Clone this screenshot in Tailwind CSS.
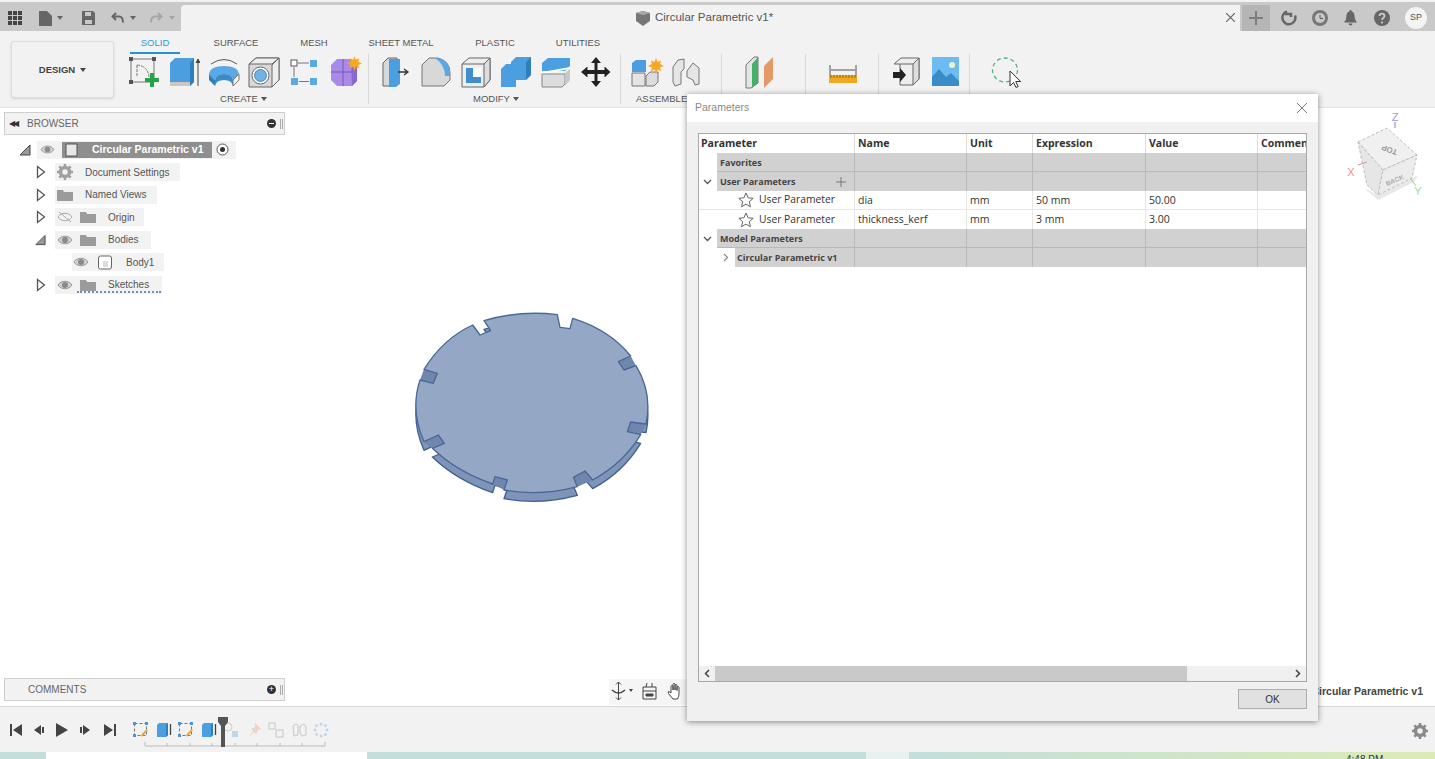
<!DOCTYPE html>
<html lang="en">
<head>
    <meta charset="UTF-8">
    <title>Circular Parametric v1 - Parameters</title>
    <script src="https://cdn.jsdelivr.net/npm/@tailwindcss/browser@4"></script>
</head>
<body class="bg-white font-['Liberation_Sans',sans-serif] text-[#555] overflow-hidden">
    <!-- shared icons -->
    <svg class="absolute w-0 h-0">
        <defs>
            <symbol id="eye" viewBox="0 0 16 12"><path d="M1 6c3-5 11-5 14 0c-3 5-11 5-14 0z" fill="#d0d0d0" stroke="#999"/><circle cx="8" cy="6" r="3" fill="#8a8a8a"/></symbol>
            <symbol id="folder" viewBox="0 0 16 12"><path d="M0 1h6l1 2h9v9H0z" fill="#9b9b9b"/></symbol>
            <symbol id="closed" viewBox="0 0 10 14"><path d="M1.500 1.500L8.500 7L1.500 12.500z" fill="#fff" stroke="#555" stroke-width="1.300"/></symbol>
            <symbol id="open" viewBox="0 0 12 12"><path d="M1 11L11 1V11z" fill="#999" stroke="#444"/></symbol>
            <symbol id="star" viewBox="0 0 16 16"><path d="M8 1l2.100 4.800 5.100.5-3.900 3.400 1.200 5.100L8 12.100l-4.500 2.700 1.200-5.100L.8 6.300l5.100-.5z" fill="#fff" stroke="#666"/></symbol>
            <symbol id="sun" viewBox="0 0 14 14"><path d="M7 0l1.300 3.500L11.500 2 10.500 5.300 14 7l-3.500 1.300 1 3.300-3.200-1.500L7 14l-1.300-3.900-3.200 1.500 1-3.300L0 7l3.500-1.700-1-3.300 3.200 1.500z" fill="#f7a823"/></symbol>
            <symbol id="sketch-step" viewBox="0 0 16 16"><rect x="1.500" y="1.500" width="12" height="12" fill="none" stroke="#777" stroke-dasharray="3 2"/><path d="M0 0h3v3H0zM12 0h3v3h-3zM0 12h3v3H0z" fill="#4f94c9"/><path d="M9 15l6-7-1.500-1L8 13z" fill="#e8a43a"/></symbol>
            <symbol id="extrude-step" viewBox="0 0 16 16"><path d="M1 3l2-2h9v12l-2 2H1z" fill="#4b9fe0"/><path d="M10 3l2-2v12l-2 2z" fill="#2f7fbd"/><path d="M14.500 2v11" stroke="#444" stroke-width="1.300"/></symbol>
        </defs>
    </svg>

    <div class="flex flex-col h-[759px]">
        <!-- top strip and tabs -->
        <div class="h-[5px] border-t-[2px] border-t-[#f2f2f2] bg-[#c9c9c9] shrink-0"></div>
        <div class="flex h-[26px] shrink-0 bg-[#c9c9c9]">
            <div class="w-[181px] flex items-center pl-[8px]">
                <svg width="14" height="14" viewBox="0 0 14 14" fill="#444"><path d="M0 0h4v4H0zM5 0h4v4H5zM10 0h4v4h-4zM0 5h4v4H0zM5 5h4v4H5zM10 5h4v4h-4zM0 10h4v4H0zM5 10h4v4H5zM10 10h4v4h-4z"/></svg>
                <svg class="ml-[17px]" width="13" height="15" viewBox="0 0 13 15" fill="#666"><path d="M0 0h8l5 5v10H0z"/></svg>
                <span class="ml-[5px] border-x-[3px] border-x-transparent border-t-[4px] border-t-[#666]"></span>
                <svg class="ml-[19px]" width="13" height="14" viewBox="0 0 13 14"><path d="M0 0h11l2 2v12H0z" fill="#666"/><path d="M3 1h6v4H3zM3 9h7v4H3z" fill="#c9c9c9"/></svg>
                <svg class="ml-[16px]" width="13" height="12" viewBox="0 0 13 12" fill="none" stroke="#666" stroke-width="2"><path d="M5 1L1.500 4.500L5 8M2 4.500h6c3 0 4 2 4 6"/></svg>
                <span class="ml-[6px] border-x-[3px] border-x-transparent border-t-[4px] border-t-[#666]"></span>
                <svg class="ml-[14px]" width="13" height="12" viewBox="0 0 13 12" fill="none" stroke="#a5a5a5" stroke-width="2"><path d="M8 1l3.500 3.500L8 8M11 4.500H5c-3 0-4 2-4 6"/></svg>
                <span class="ml-[6px] border-x-[3px] border-x-transparent border-t-[4px] border-t-[#a5a5a5]"></span>
            </div>
            <div class="w-[1059px] bg-[#f2f2f2] rounded-tl-[4px] flex items-center relative">
                <div class="flex items-center gap-[4px] ml-[454px] text-[11.500px] text-[#555]">
                    <svg width="16" height="15" viewBox="0 0 16 15"><path d="M1 2l7-2 7 2v8l-7 5-7-5z" fill="#777"/><path d="M1 2l7 2 7-2-7-2z" fill="#aaa"/></svg>
                    <span>Circular Parametric v1*</span>
                </div>
                <svg class="absolute right-[5px] top-[8px]" width="9" height="9" viewBox="0 0 9 9" stroke="#666" stroke-width="1.200"><path d="M0 0l9 9M9 0L0 9"/></svg>
            </div>
            <div class="flex-1 flex items-center">
                <div class="w-[28px] ml-[2px] h-full bg-[#b5b5b5] flex items-center justify-center">
                    <svg width="14" height="14" viewBox="0 0 14 14" stroke="#7d7d7d" stroke-width="2"><path d="M7 0v14M0 7h14"/></svg>
                </div>
                <svg class="ml-[11px]" width="16" height="16" viewBox="0 0 16 16" fill="none" stroke="#666" stroke-width="2.500"><path d="M6 1.500a6.500 6.500 0 1 0 8 4M4 4h6v3"/></svg>
                <svg class="ml-[15px]" width="16" height="16" viewBox="0 0 16 16"><circle cx="8" cy="8" r="8" fill="#777"/><circle cx="8" cy="8" r="5" fill="#c9c9c9"/><path d="M8 5v3.500h3" stroke="#555" fill="none"/></svg>
                <svg class="ml-[15px]" width="15" height="16" viewBox="0 0 15 16" fill="#666"><path d="M7.500 0c-1 0-1.300 1-1.300 1.500C3 2.500 3.500 7 3 9c-.3 1.200-1.500 2.500-2 3.500h13c-.5-1-1.700-2.300-2-3.500-.5-2 0-6.500-3.200-7.500C8.800 1 8.500 0 7.500 0zM5.500 13.500h4a2 2 0 0 1-4 0z"/></svg>
                <svg class="ml-[16px]" width="16" height="16" viewBox="0 0 16 16"><circle cx="8" cy="8" r="8" fill="#666"/><path d="M5.500 6c0-3.200 5-3.200 5 0c0 2-2.500 2-2.500 4" stroke="#c9c9c9" stroke-width="1.800" fill="none"/><circle cx="8" cy="12.500" r="1.100" fill="#c9c9c9"/></svg>
                <div class="ml-[15px] w-[22px] h-[22px] rounded-full bg-[#f4f4f4] text-[9px] text-[#555] flex items-center justify-center">SP</div>
            </div>
        </div>

        <!-- ribbon -->
        <div class="h-[77px] shrink-0 bg-[#f2f2f2] border-b border-b-[#e3e3e3] flex items-start">
            <div class="ml-[11px] mt-[10px] w-[103px] h-[57px] pt-[1px] bg-[#f2f2f2] border border-[#dcdcdc] rounded-[3px] shadow-sm flex items-center justify-center gap-[5px] text-[9.500px] font-semibold text-[#444]">
                DESIGN <span class="border-x-[3px] border-x-transparent border-t-[4px] border-t-[#444]"></span>
            </div>
            <div class="ml-[10px] flex flex-col">
                <div class="flex h-[23px] text-[9.500px] leading-[23px] text-[#555] text-center">
                    <div class="ml-[6px] w-[50px] text-[#2d9cdb] border-b-[2px] border-b-[#1f93d3]">SOLID</div>
                    <div class="ml-[16px] w-[80px]">SURFACE</div>
                    <div class="w-[76px]">MESH</div>
                    <div class="w-[98px]">SHEET METAL</div>
                    <div class="w-[90px]">PLASTIC</div>
                    <div class="w-[76px]">UTILITIES</div>
                </div>
                <div class="flex h-[52px] items-start">
                    <!-- create -->
                    <div class="w-[245px] h-[50px] border-r border-r-[#d8d8d8] flex flex-col">
                        <div class="flex h-[36px] shrink-0 items-center">
                            <div class="w-[40px] flex justify-center"><svg width="32" height="32" viewBox="0 0 32 32"><rect x="3" y="3" width="23" height="23" fill="none" stroke="#777"/><path d="M1 1h4v4H1zM24 1h4v4h-4zM1 24h4v4H1z" fill="#555"/><path d="M9 9v12M9 9q11 1 12 12" fill="none" stroke="#777" stroke-dasharray="3 1"/><path d="M22 17h4v5h5v4h-5v5h-4v-5h-5v-4h5z" fill="#1fa64a"/></svg></div>
                            <div class="w-[40px] flex justify-center"><svg width="32" height="32" viewBox="0 0 32 32"><path d="M2 7l5-5h19v24l-4 4H2z" fill="#4b9fe0"/><path d="M22 7l4-5v24l-4 4z" fill="#2f7fbd"/><path d="M2 26h20v4H2z" fill="#cfc7bd"/><path d="M30 30V4M28 7l2-4 2 4" stroke="#444" fill="#444"/></svg></div>
                            <div class="w-[40px] flex justify-center"><svg width="32" height="32" viewBox="0 0 32 32"><path d="M3 8q13-9 26 0" fill="none" stroke="#555"/><path d="M1 18q1-8 15-8t15 8l-6 6q-1-6-9-6t-9 6z" fill="#5aa9e6"/><path d="M1 18l6 6v6l-6-6z" fill="#2f7fbd"/><path d="M7 24q1-6 9-6t9 6v6q-1-6-9-6t-9 6z" fill="#3a8bca"/><path d="M25 24l6-6v6l-6 6z" fill="#f4f4f4" stroke="#777"/></svg></div>
                            <div class="w-[40px] flex justify-center"><svg width="32" height="32" viewBox="0 0 32 32"><path d="M1 8l7-6h23v22l-7 7H1z" fill="#d8d8d8" stroke="#666"/><path d="M24 9l7-7v22l-7 7zM1 8h23l7-6H8z" fill="#eee" stroke="#666"/><circle cx="12.500" cy="19.500" r="8.500" fill="#fff" stroke="#666"/><circle cx="12.500" cy="19.500" r="6" fill="#6eb2e6" stroke="#4688bd"/></svg></div>
                            <div class="w-[40px] flex justify-center"><svg width="30" height="30" viewBox="0 0 30 30"><rect x="2" y="3" width="6" height="6" fill="#fff" stroke="#555"/><rect x="21" y="3" width="7" height="7" fill="#5aa9e0"/><rect x="2" y="21" width="7" height="7" fill="#5aa9e0"/><rect x="21" y="21" width="7" height="7" fill="#5aa9e0"/><path d="M9 6h11M5 10v10M10 24.500h10" stroke="#777"/></svg></div>
                            <div class="w-[40px] flex justify-center relative"><svg width="32" height="32" viewBox="0 0 32 32"><path d="M3 9l6-6h14l6 7v15l-5 5H9l-6-6z" fill="#a98ae6"/><path d="M3 16h26M15 3v27" stroke="#7559bd"/><path d="M23 3l6 7v15l-5 5z" fill="#8768d0"/></svg><svg class="absolute right-[2px] top-0" width="15" height="15"><use href="#sun"/></svg></div>
                        </div>
                        <div class="flex justify-center items-center gap-[3px] text-[9.500px] leading-[11px] mt-[3px] mr-[5px]">CREATE <span class="border-x-[3px] border-x-transparent border-t-[4px] border-t-[#555]"></span></div>
                    </div>
                    <!-- modify -->
                    <div class="w-[252px] pl-[7px] h-[50px] border-r border-r-[#d8d8d8] flex flex-col">
                        <div class="flex h-[36px] shrink-0 items-center">
                            <div class="w-[40px] flex justify-center"><svg width="30" height="32" viewBox="0 0 30 32"><path d="M2 7l5-5h9v28H2z" fill="#d8d8d8" stroke="#666"/><path d="M8 3h11v25l-5 3H8z" fill="#4b9fe0"/><path d="M17 16h9M23 13l4 3-4 3" stroke="#333" fill="none" stroke-width="1.300"/></svg></div>
                            <div class="w-[40px] flex justify-center"><svg width="30" height="32" viewBox="0 0 30 32"><path d="M1 9l7-7h9q12 3 12 15v7l-6 6H1z" fill="#d8d8d8" stroke="#777"/><path d="M14 2h3q12 3 12 15v3h-5q0-11-10-18z" fill="#5aa9e6"/></svg></div>
                            <div class="w-[40px] flex justify-center"><svg width="30" height="32" viewBox="0 0 30 32"><path d="M1 8l7-6h21v22l-6 7H1z" fill="#eee" stroke="#666"/><path d="M23 8l6-6v22l-6 7zM1 8h22" fill="#ddd" stroke="#666"/><path d="M5 12h7v9h8v6H5z" fill="#3f8fd0"/><path d="M12 12h8v9h-8z" fill="#fff"/></svg></div>
                            <div class="w-[40px] flex justify-center"><svg width="32" height="32" viewBox="0 0 32 32"><path d="M11 6l5-5h15v18l-5 5H16v7H1V13l5-5h5z" fill="#4b9fe0"/><path d="M26 6l5-5v18l-5 5z" fill="#2f7fbd"/></svg></div>
                            <div class="w-[40px] flex justify-center"><svg width="30" height="32" viewBox="0 0 30 32"><path d="M1 7l6-5h22v8l-5 5H1z" fill="#4b9fe0"/><path d="M1 16l28-5v2L1 18z" fill="#fff"/><path d="M1 18h23v10l-3 3H1z" fill="#dcdcdc" stroke="#888"/><path d="M24 17l5-4v11l-5 6z" fill="#c8c8c8"/></svg></div>
                            <div class="w-[40px] flex justify-center"><svg width="30" height="30" viewBox="0 0 30 30" fill="#222"><path d="M15 0l5 6h-3.500v7h7v-3.500l6 5.500-6 5.500v-3.500h-7v7h3.500l-5 6-5-6h3.500v-7h-7v3.500L0 15l6.500-5.500V13h7V6H10z"/></svg></div>
                        </div>
                        <div class="flex justify-center items-center gap-[3px] text-[9.500px] leading-[11px] mt-[3px] mr-[4px]">MODIFY <span class="border-x-[3px] border-x-transparent border-t-[4px] border-t-[#555]"></span></div>
                    </div>
                    <!-- assemble -->
                    <div class="w-[101px] pl-[5px] h-[50px] border-r border-r-[#d8d8d8] flex flex-col">
                        <div class="flex h-[36px] shrink-0 items-center">
                            <div class="w-[40px] flex justify-center relative"><svg width="30" height="30" viewBox="0 0 30 30"><path d="M1 6l4-3h10v12H1z" fill="#4b9fe0"/><path d="M1 16h13v13H1z" fill="#e4e4e4" stroke="#777"/><path d="M15 19l4-4h8v10l-4 4h-8z" fill="#dcdcdc" stroke="#777"/></svg><svg class="absolute right-[2px] top-[1px]" width="16" height="16"><use href="#sun"/></svg></div>
                            <div class="w-[40px] flex justify-center"><svg width="30" height="30" viewBox="0 0 30 30" fill="#e5e5e5" stroke="#777"><path d="M2 10l5-7 6-1v10l-3 3v12l-6 2-2-4z"/><path d="M16 14l6-8 6 5v16l-4 1-2-5-6-3z"/></svg></div>
                        </div>
                        <div class="text-[9.500px] leading-[11px] mt-[3px] pl-[10px]">ASSEMBLE</div>
                    </div>
                    <!-- construct -->
                    <div class="w-[84px] h-[50px] border-r border-r-[#d8d8d8] flex justify-center pt-[1px]">
                        <svg class="ml-[-8px]" width="32" height="34" viewBox="0 0 32 34"><path d="M2 10l8-8h4v26l-7 5H2z" fill="#e5e5e5" stroke="#777"/><path d="M8 9l6-7v26l-6 5z" fill="#44b06a"/><path d="M20 11l9-9v22l-9 9z" fill="#e49a64"/></svg>
                    </div>
                    <!-- inspect -->
                    <div class="w-[73px] h-[50px] border-r border-r-[#d8d8d8] flex justify-center pt-[7px] pl-[2px]">
                        <svg width="28" height="26" viewBox="0 0 28 26"><path d="M1 4v12M27 4v12M2 9h24" stroke="#555" fill="none"/><path d="M0 14h28v8H0z" fill="#f0a91e"/><path d="M2 14v3M5 14v3M8 14v3M11 14v3M14 14v3M17 14v3M20 14v3M23 14v3M26 14v3" stroke="#8a6410"/></svg>
                    </div>
                    <!-- insert -->
                    <div class="w-[91px] h-[50px] border-r border-r-[#d8d8d8] flex items-start justify-center gap-[12px] pt-[3px] pl-[3px]">
                        <svg width="27" height="29" viewBox="0 0 27 29"><path d="M1 7l7-6h18v21l-6 6H7V7z" fill="#eee" stroke="#666"/><path d="M20 7l6-6v21l-6 6zM7 7h13" fill="#ddd" stroke="#666"/><path d="M0 15h7v-4l6 7-6 7v-4H0z" fill="#222"/></svg>
                        <svg width="27" height="29" viewBox="0 0 27 29"><rect width="27" height="29" fill="#6cbcf3"/><path d="M0 27V20l7-8 7 8 5-4 8 8v5H0z" fill="#3a8cc9"/><circle cx="20" cy="8" r="3" fill="#eef3c5"/></svg>
                    </div>
                    <!-- select -->
                    <div class="w-[56px] pl-[21px] pt-[3px]">
                        <svg width="30" height="32" viewBox="0 0 30 32" fill="none"><ellipse cx="14" cy="13" rx="12.500" ry="12" stroke="#58b184" stroke-width="1.300" stroke-dasharray="4 3"/><path d="M19 14v15l3.500-3.500 2.500 5 2.200-1-2.500-5h5z" fill="#fff" stroke="#333"/></svg>
                    </div>
                </div>
            </div>
        </div>

        <!-- viewport -->
        <div class="relative flex-1 flex flex-col justify-between pl-[4px] pt-[4px] pb-[5px] border-b border-b-[#d5d5d5] min-h-0">
            <div>
                <div class="w-[281px] h-[23px] bg-[#f2f2f2] border border-[#cfcfcf] flex items-center text-[10px] text-[#666]">
                    <span class="ml-[4px] tracking-[-2px] text-[8px] text-[#333]">◀◀</span>
                    <span class="ml-[10px]">BROWSER</span>
                    <span class="ml-auto w-[9px] h-[9px] rounded-full bg-[#333] flex items-center justify-center"><span class="w-[5px] h-[1px] bg-white"></span></span>
                    <span class="ml-[4px] mr-[1px] w-[3px] h-[10px] border-x border-x-[#aaa]"></span>
                </div>
                <!-- tree -->
                <div class="mt-[3.500px] text-[10px] text-[#555]">
                    <div class="flex items-center h-[22.500px] pl-[15px]">
                        <svg class="shrink-0" width="12" height="12"><use href="#open"/></svg>
                        <div class="ml-[6px] h-[18px] bg-[#f2f2f2] flex items-center pl-[3px] w-[199px]">
                            <svg width="15" height="11"><use href="#eye"/></svg>
                            <div class="ml-[7px] w-[150px] h-[16px] bg-[#8f8f8f] flex items-center text-white font-bold text-[10.500px]">
                                <svg class="ml-[1px]" width="16" height="15" viewBox="0 0 16 15"><path d="M3 2h11v12H3z" fill="#e8e8e8" stroke="#555"/></svg>
                                <span class="ml-[13px]">Circular Parametric v1</span>
                            </div>
                            <svg class="ml-[4px]" width="13" height="13" viewBox="0 0 13 13"><circle cx="6.500" cy="6.500" r="5.500" fill="#fff" stroke="#555"/><circle cx="6.500" cy="6.500" r="2.500" fill="#333"/></svg>
                        </div>
                    </div>
                    <div class="flex items-center h-[22.500px] pl-[32px]">
                        <svg width="10" height="14"><use href="#closed"/></svg>
                        <div class="ml-[9px] h-[18px] w-[125px] bg-[#f2f2f2] flex items-center pl-[2px]">
                            <svg width="16" height="16" viewBox="0 0 16 16"><circle cx="8" cy="8" r="4.500" fill="none" stroke="#a0a0a0" stroke-width="3.500"/><path d="M8 0v3M8 13v3M0 8h3M13 8h3M2.300 2.300l2 2M11.700 11.700l2 2M2.300 13.700l2-2M11.700 4.300l2-2" stroke="#a0a0a0" stroke-width="2.500"/></svg>
                            <span class="ml-[12px]">Document Settings</span>
                        </div>
                    </div>
                    <div class="flex items-center h-[22.500px] pl-[32px]">
                        <svg width="10" height="14"><use href="#closed"/></svg>
                        <div class="ml-[9px] h-[18px] w-[102px] bg-[#f2f2f2] flex items-center pl-[2px]">
                            <svg width="16" height="12"><use href="#folder"/></svg>
                            <span class="ml-[12px]">Named Views</span>
                        </div>
                    </div>
                    <div class="flex items-center h-[22.500px] pl-[32px]">
                        <svg width="10" height="14"><use href="#closed"/></svg>
                        <div class="ml-[9px] h-[18px] w-[89px] bg-[#f2f2f2] flex items-center pl-[2px]">
                            <svg width="16" height="12" viewBox="0 0 16 12"><path d="M1 6c3-5 11-5 14 0c-3 5-11 5-14 0z" fill="none" stroke="#aaa"/><path d="M2 1l12 10" stroke="#aaa"/></svg>
                            <svg class="ml-[7px]" width="16" height="12"><use href="#folder"/></svg>
                            <span class="ml-[12px]">Origin</span>
                        </div>
                    </div>
                    <div class="flex items-center h-[22.500px] pl-[31px]">
                        <svg width="11" height="12"><use href="#open"/></svg>
                        <div class="ml-[9px] h-[18px] w-[96px] bg-[#f2f2f2] flex items-center pl-[2px]">
                            <svg width="16" height="12"><use href="#eye"/></svg>
                            <svg class="ml-[7px]" width="16" height="12"><use href="#folder"/></svg>
                            <span class="ml-[12px]">Bodies</span>
                        </div>
                    </div>
                    <div class="flex items-center h-[22.500px] pl-[68px]">
                        <div class="h-[18px] w-[92px] bg-[#f2f2f2] flex items-center pl-[1px]">
                            <svg width="16" height="12"><use href="#eye"/></svg>
                            <svg class="ml-[8px]" width="16" height="15" viewBox="0 0 16 15"><rect x="1.500" y="1" width="13" height="13" rx="2" fill="#fff" stroke="#666"/><rect x="6" y="6" width="5" height="6" fill="#ddd"/></svg>
                            <span class="ml-[13px]">Body1</span>
                        </div>
                    </div>
                    <div class="flex items-center h-[22.500px] pl-[32px]">
                        <svg width="10" height="14"><use href="#closed"/></svg>
                        <div class="relative ml-[9px] h-[18px] w-[107px] bg-[#f2f2f2] flex items-center pl-[2px]">
                            <svg width="16" height="12"><use href="#eye"/></svg>
                            <svg class="ml-[7px]" width="16" height="12"><use href="#folder"/></svg>
                            <span class="ml-[12px]">Sketches</span>
                            <span class="absolute left-[22px] bottom-[1px] w-[84px] border-b-[2px] border-dotted border-b-[#6f8fc0]"></span>
                        </div>
                    </div>
                </div>
            </div>
            <div class="w-[281px] h-[23px] bg-[#f2f2f2] border border-[#cfcfcf] flex items-center text-[10px] text-[#666]">
                <span class="ml-[23px]">COMMENTS</span>
                <span class="ml-auto w-[9px] h-[9px] rounded-full bg-[#333] flex items-center justify-center text-white text-[9px] leading-none">+</span>
                <span class="ml-[4px] mr-[1px] w-[3px] h-[10px] border-x border-x-[#aaa]"></span>
            </div>

            <!-- model on the canvas -->
            <svg class="absolute left-[400px] top-[192px]" width="260" height="210" viewBox="0 0 780 630">
                <path transform="translate(0 26)" fill="#7e94b8" stroke="#3f5f92" stroke-width="4" stroke-linejoin="round" d="M252 62Q360 30 472 44L480 82L510 86L518 55Q630 90 692 168L655 185L672 210L708 197Q758 280 738 372L692 366L682 395L722 404Q670 490 578 540L555 513L520 532L532 560Q420 590 312 570L322 540L285 530L278 552Q170 515 97 445L133 430L115 405L72 425Q30 330 60 240L100 250L112 220L72 208Q130 115 218 75L240 105L272 92z"/>
                <!-- notch walls -->
                <path fill="#6f86ad" d="M692 168L655 185L672 210L708 197zM738 372L692 366L682 395L722 404zM578 540L555 513L520 532L532 560zM312 570L322 540L285 530L278 552zM97 445L133 430L115 405L72 425zM60 240L100 250L112 220L72 208z"/>
                <path fill="#94a8c6" stroke="#4a6897" stroke-width="4" stroke-linejoin="round" d="M252 62Q360 30 472 44L480 82L510 86L518 55Q630 90 692 168L655 185L672 210L708 197Q758 280 738 372L692 366L682 395L722 404Q670 490 578 540L555 513L520 532L532 560Q420 590 312 570L322 540L285 530L278 552Q170 515 97 445L133 430L115 405L72 425Q30 330 60 240L100 250L112 220L72 208Q130 115 218 75L240 105L272 92z"/>
            </svg>

            <!-- view cube -->
            <svg class="absolute left-[1340px] top-[2px]" width="90" height="100" viewBox="0 0 90 100">
                <path d="M24 78l14 12 36-18 4-6-6 2-34 17z" fill="#ccc" opacity=".45"/>
                <path d="M18 32l29-14 30 27-34 15z" fill="#f0f0f0" stroke="#bbb" stroke-dasharray="3 2"/>
                <path d="M18 32l25 28-5 25-11-10z" fill="#e6e6e6" stroke="#bbb" stroke-dasharray="3 2"/>
                <path d="M43 60l34-15-5 23-34 17z" fill="#ececec" stroke="#bbb" stroke-dasharray="3 2"/>
                <text transform="translate(58 40) rotate(200)" font-size="8" font-weight="700" fill="#999">TOP</text>
                <text transform="translate(47 76) rotate(-23)" font-size="6.500" font-weight="700" fill="#aaa">BACK</text>
                <path d="M55 18V12" stroke="#7d7de0"/><path d="M18 55l9-3" stroke="#e88"/><path d="M70 68l6 8" stroke="#8fd08f"/>
                <text x="55" y="11" font-size="11" text-anchor="middle" fill="#9a9aee">Z</text>
                <text x="11" y="66" font-size="11" text-anchor="middle" fill="#f08c8c">X</text>
                <text x="78" y="85" font-size="11" text-anchor="middle" fill="#9fd89f">Y</text>
            </svg>

            <!-- nav bar and document name -->
            <div class="absolute left-[609px] bottom-[1px] h-[26px] w-[78px] pb-[3px] bg-[#f5f5f5] flex items-center pl-[2px]">
                <svg width="15" height="20" viewBox="0 0 15 20" fill="none" stroke="#444"><path d="M7.500 1v18M5 3.500l2.500-2.500 2.500 2.500M5 16.500l2.500 2.500 2.500-2.500"/><path d="M1 9q6.500 6 13 0" stroke-width="1.500"/></svg>
                <span class="ml-[3px] border-x-[2px] border-x-transparent border-t-[3px] border-t-[#444]"></span>
                <svg class="ml-[9px]" width="15" height="18" viewBox="0 0 15 18" fill="none" stroke="#444"><path d="M1 5h13v12H1zM1 9h13M4 5l1-4M10 5V1"/><path d="M4 12h7v2H4z" fill="#444"/></svg>
                <svg class="ml-[10px]" width="16" height="18" viewBox="0 0 16 18" fill="#fff" stroke="#444"><path d="M4 11V4.500a1 1 0 0 1 2 0V8V2.500a1 1 0 0 1 2 0V8V3.500a1 1 0 0 1 2 0V8.500V5.500a1 1 0 0 1 2 0V12q0 2-1.500 5H6L1.500 11.500q-1-2 .5-2z"/></svg>
            </div>
            <div class="absolute right-[12px] bottom-[6px] text-[10.500px] font-bold text-[#444]">Circular Parametric v1</div>

            <!-- parameters dialog -->
            <div class="absolute left-[687px] top-[-14px] w-[631px] h-[627px] bg-[#f0f0f0] shadow-[0_1px_6px_rgba(0,0,0,0.45)] flex flex-col font-['Open_Sans',sans-serif] z-10">
                <div class="h-[28px] bg-white flex items-center pl-[8px] pr-[11px] shrink-0 font-['Liberation_Sans',sans-serif] text-[10.500px] text-[#8a8a8a]">
                    Parameters
                    <svg class="ml-auto" width="10" height="10" viewBox="0 0 10 10" stroke="#777"><path d="M0 0l10 10M10 0L0 10"/></svg>
                </div>
                <div class="mx-[11px] mt-[11px] w-[609px] h-[549px] bg-white border border-[#a8a8a8] flex flex-col text-[10.500px] text-[#333]">
                    <div class="grid grid-cols-[156px_112px_66px_113px_112px_48px] flex-1 content-start auto-rows-[19px]">
                        <div class="px-[2px] font-bold text-[10.500px] leading-[19px] border-r border-r-[#ddd]">Parameter</div>
                        <div class="px-[3px] font-bold text-[10.500px] leading-[19px] border-r border-r-[#ddd]">Name</div>
                        <div class="px-[3px] font-bold text-[10.500px] leading-[19px] border-r border-r-[#ddd]">Unit</div>
                        <div class="px-[3px] font-bold text-[10.500px] leading-[19px] border-r border-r-[#ddd]">Expression</div>
                        <div class="px-[3px] font-bold text-[10.500px] leading-[19px] border-r border-r-[#ddd]">Value</div>
                        <div class="pl-[3px] font-bold text-[10.500px] leading-[19px] overflow-hidden whitespace-nowrap">Comment</div>

                        <div class="ml-[18px] bg-[#d1d1d1] border-r border-b border-[#b9b9b9] pl-[3px] font-bold text-[9px] leading-[19px] text-[#444]">Favorites</div>
                        <div class="bg-[#d1d1d1] border-r border-b border-[#b9b9b9]"></div><div class="bg-[#d1d1d1] border-r border-b border-[#b9b9b9]"></div><div class="bg-[#d1d1d1] border-r border-b border-[#b9b9b9]"></div><div class="bg-[#d1d1d1] border-r border-b border-[#b9b9b9]"></div><div class="bg-[#d1d1d1] border-b border-[#b9b9b9]"></div>

                        <div class="flex items-center">
                            <svg class="ml-[4px] mr-[5px] shrink-0" width="9" height="6" viewBox="0 0 9 6" fill="none" stroke="#555" stroke-width="1.300"><path d="M1 1l3.500 3.500L8 1"/></svg>
                            <div class="flex-1 h-full bg-[#d1d1d1] border-r border-[#b9b9b9] pl-[3px] font-bold text-[9px] leading-[19px] text-[#444] flex items-center">User Parameters<svg class="ml-auto mr-[8px]" width="10" height="10" viewBox="0 0 10 10" stroke="#777"><path d="M5 0v10M0 5h10"/></svg></div>
                        </div>
                        <div class="bg-[#d1d1d1] border-r border-[#b9b9b9]"></div><div class="bg-[#d1d1d1] border-r border-[#b9b9b9]"></div><div class="bg-[#d1d1d1] border-r border-[#b9b9b9]"></div><div class="bg-[#d1d1d1] border-r border-[#b9b9b9]"></div><div class="bg-[#d1d1d1]"></div>

                        <div class="flex items-center pl-[39px] border-r border-b border-[#e6e6e6]"><svg width="16" height="16"><use href="#star"/></svg><span class="ml-[5px] text-[10.300px]">User Parameter</span></div>
                        <div class="px-[3px] leading-[19px] border-r border-b border-[#e6e6e6]">dia</div>
                        <div class="px-[3px] leading-[19px] border-r border-b border-[#e6e6e6]">mm</div>
                        <div class="px-[3px] leading-[19px] border-r border-b border-[#e6e6e6]">50 mm</div>
                        <div class="px-[3px] leading-[19px] border-r border-b border-[#e6e6e6]">50.00</div>
                        <div class="border-b border-[#e6e6e6]"></div>

                        <div class="flex items-center pl-[39px] border-r border-[#e6e6e6]"><svg width="16" height="16"><use href="#star"/></svg><span class="ml-[5px] text-[10.300px]">User Parameter</span></div>
                        <div class="px-[3px] leading-[19px] border-r border-[#e6e6e6]">thickness_kerf</div>
                        <div class="px-[3px] leading-[19px] border-r border-[#e6e6e6]">mm</div>
                        <div class="px-[3px] leading-[19px] border-r border-[#e6e6e6]">3 mm</div>
                        <div class="px-[3px] leading-[19px] border-r border-[#e6e6e6]">3.00</div>
                        <div></div>

                        <div class="flex items-center">
                            <svg class="ml-[4px] mr-[5px] shrink-0" width="9" height="6" viewBox="0 0 9 6" fill="none" stroke="#555" stroke-width="1.300"><path d="M1 1l3.500 3.500L8 1"/></svg>
                            <div class="flex-1 h-full bg-[#d1d1d1] border-r border-b border-[#b9b9b9] pl-[3px] font-bold text-[9px] leading-[19px] text-[#444]">Model Parameters</div>
                        </div>
                        <div class="bg-[#d1d1d1] border-r border-b border-[#b9b9b9]"></div><div class="bg-[#d1d1d1] border-r border-b border-[#b9b9b9]"></div><div class="bg-[#d1d1d1] border-r border-b border-[#b9b9b9]"></div><div class="bg-[#d1d1d1] border-r border-b border-[#b9b9b9]"></div><div class="bg-[#d1d1d1] border-b border-[#b9b9b9]"></div>

                        <div class="flex items-center">
                            <svg class="ml-[24px] mr-[6px] shrink-0" width="6" height="9" viewBox="0 0 6 9" fill="none" stroke="#888" stroke-width="1.200"><path d="M1 1l3.500 3.500L1 8"/></svg>
                            <div class="flex-1 h-full bg-[#d1d1d1] border-r border-[#b9b9b9] pl-[2px] font-bold text-[9px] leading-[19px] text-[#444]">Circular Parametric v1</div>
                        </div>
                        <div class="bg-[#d1d1d1] border-r border-[#b9b9b9]"></div><div class="bg-[#d1d1d1] border-r border-[#b9b9b9]"></div><div class="bg-[#d1d1d1] border-r border-[#b9b9b9]"></div><div class="bg-[#d1d1d1] border-r border-[#b9b9b9]"></div><div class="bg-[#d1d1d1]"></div>
                    </div>
                    <!-- horizontal scrollbar -->
                    <div class="h-[15px] bg-[#f0f0f0] flex items-center shrink-0">
                        <svg class="mx-[5px]" width="6" height="9" viewBox="0 0 6 9" fill="none" stroke="#444" stroke-width="1.500"><path d="M5 1L1.500 4.500L5 8"/></svg>
                        <div class="w-[472px] h-full bg-[#c9c9c9]"></div>
                        <svg class="ml-auto mr-[5px]" width="6" height="9" viewBox="0 0 6 9" fill="none" stroke="#444" stroke-width="1.500"><path d="M1 1l3.500 3.500L1 8"/></svg>
                    </div>
                </div>
                <div class="flex justify-end mt-[7px] mr-[11px]">
                    <div class="w-[69px] h-[20px] bg-[#e1e1e1] border border-[#adadad] flex items-center justify-center text-[10px] text-[#333] font-['Liberation_Sans',sans-serif]">OK</div>
                </div>
            </div>
        </div>

        <!-- timeline -->
        <div class="h-[45px] shrink-0 bg-[#f2f2f2] relative flex items-center">
            <div class="flex items-center ml-[10px]">
                <svg width="12" height="12" viewBox="0 0 12 12" fill="#444"><path d="M0 0h2v12H0zM12 0v12L3 6z"/></svg>
                <svg class="ml-[11px]" width="12" height="12" viewBox="0 0 12 12" fill="#444"><path d="M8 1v10L1 6zM9 3h2v6H9z"/></svg>
                <svg class="ml-[11px]" width="12" height="14" viewBox="0 0 12 14" fill="#444"><path d="M0 0l12 7L0 14z"/></svg>
                <svg class="ml-[11px]" width="12" height="12" viewBox="0 0 12 12" fill="#444"><path d="M4 1v10l7-5zM1 3h2v6H1z"/></svg>
                <svg class="ml-[13px]" width="12" height="12" viewBox="0 0 12 12" fill="#444"><path d="M0 0l9 6-9 6zM10 0h2v12h-2z"/></svg>
            </div>
            <!-- feature icons on the timeline -->
            <div class="flex items-center ml-[17px] gap-[6.500px]">
                <svg width="16" height="16"><use href="#sketch-step"/></svg>
                <svg width="16" height="16"><use href="#extrude-step"/></svg>
                <svg width="16" height="16"><use href="#sketch-step"/></svg>
                <svg width="16" height="16"><use href="#extrude-step"/></svg>
                <svg class="opacity-40" width="16" height="16" viewBox="0 0 16 16"><circle cx="5" cy="5" r="4" fill="none" stroke="#999"/><rect x="9" y="9" width="6" height="6" fill="#6eb2e6"/></svg>
                <svg class="opacity-40" width="16" height="16" viewBox="0 0 16 16" fill="#e8a68a"><path d="M9 1l6 6-3 1-2 4-2-2-5 5 4-6-2-2 4-2z"/></svg>
                <svg class="opacity-40" width="16" height="16" viewBox="0 0 16 16" fill="none" stroke="#888"><rect x="1" y="1" width="6" height="6"/><rect x="8" y="8" width="7" height="7"/></svg>
                <svg class="opacity-40" width="16" height="16" viewBox="0 0 16 16" fill="none" stroke="#888"><path d="M2 4l3-2 2 1v10l-4 1zM9 4l4-2 2 3v8l-4 1-2-3z"/></svg>
                <svg class="opacity-40" width="16" height="16" viewBox="0 0 16 16" fill="#6eb2e6"><circle cx="8" cy="2" r="1.500"/><circle cx="8" cy="14" r="1.500"/><circle cx="2" cy="8" r="1.500"/><circle cx="14" cy="8" r="1.500"/><circle cx="3.500" cy="3.500" r="1.500"/><circle cx="12.500" cy="12.500" r="1.500"/><circle cx="3.500" cy="12.500" r="1.500"/><circle cx="12.500" cy="3.500" r="1.500"/></svg>
            </div>
            <!-- ruler and playhead -->
            <svg class="absolute left-[140px] top-[8px]" width="190" height="32" viewBox="0 0 190 32" fill="none" stroke="#bbb"><path d="M5 27V31H185V27M27 28v3M50 28v3M72 28v3M95 28v3M117 28v3M140 28v3M162 28v3"/><path d="M78 2h10v5l-3 4v21h-4V11l-3-4z" fill="#555" stroke="none"/></svg>
            <svg class="absolute right-[7px] top-[16px]" width="16" height="16" viewBox="0 0 16 16"><circle cx="8" cy="8" r="4.500" fill="none" stroke="#8a8a8a" stroke-width="3.500"/><path d="M8 0v3M8 13v3M0 8h3M13 8h3M2.300 2.300l2 2M11.700 11.700l2 2M2.300 13.700l2-2M11.700 4.300l2-2" stroke="#8a8a8a" stroke-width="2.500"/></svg>
        </div>

        <!-- task bar sliver -->
        <div class="h-[7px] shrink-0 flex overflow-hidden text-[10px] text-[#333] leading-none">
            <div class="w-[46px] bg-[#c3dedb]"></div>
            <div class="w-[321px] bg-white"></div>
            <div class="w-[499px] bg-[#c3dedb]"></div>
            <div class="w-[43px] bg-[#e8f1ef]"></div>
            <div class="flex-1 bg-gradient-to-r from-[#c3dedb] to-[#dcebb6] pl-[437px] pt-[3px]">4:48 PM</div>
        </div>
    </div>
</body>
</html>
